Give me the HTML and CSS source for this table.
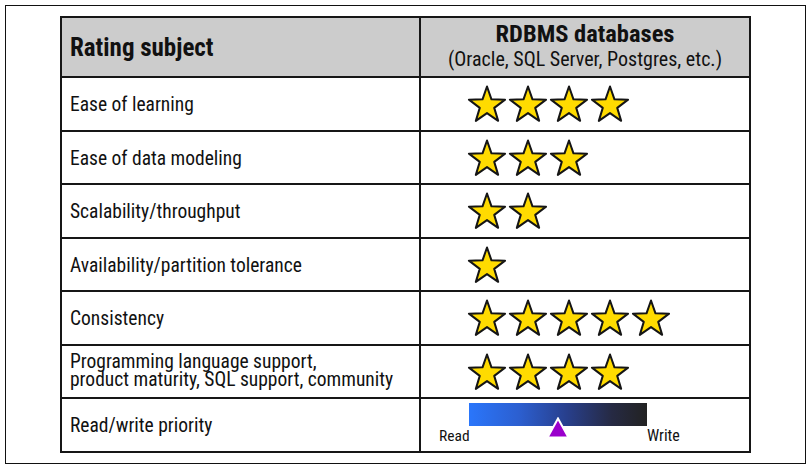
FILE: index.html
```html
<!DOCTYPE html>
<html lang="en">
<head>
<meta charset="utf-8">
<title>Rating table</title>
<link rel="stylesheet" href="styles.css">
</head>
<body>
<svg class="defs" aria-hidden="true">
  <symbol id="star" viewBox="0 0 40 38">
    <polygon points="20,1.5 24.47,14.35 38.07,14.63 27.23,22.85 31.17,35.87 20,28.1 8.83,35.87 12.77,22.85 1.93,14.63 15.53,14.35" fill="#ffdb00" stroke="#151515" stroke-width="2" stroke-linejoin="round"/>
  </symbol>
</svg>
<div class="frame">
  <div class="table">
    <div class="cell head head-left">Rating subject</div>
    <div class="cell head head-right">
      <div class="h1">RDBMS databases</div>
      <div class="h2">(Oracle, SQL Server, Postgres, etc.)</div>
    </div>

    <div class="cell label">Ease of learning</div>
    <div class="cell stars">
      <svg class="star"><use href="#star"/></svg><svg class="star"><use href="#star"/></svg><svg class="star"><use href="#star"/></svg><svg class="star"><use href="#star"/></svg>
    </div>

    <div class="cell label">Ease of data modeling</div>
    <div class="cell stars">
      <svg class="star"><use href="#star"/></svg><svg class="star"><use href="#star"/></svg><svg class="star"><use href="#star"/></svg>
    </div>

    <div class="cell label">Scalability/throughput</div>
    <div class="cell stars">
      <svg class="star"><use href="#star"/></svg><svg class="star"><use href="#star"/></svg>
    </div>

    <div class="cell label">Availability/partition tolerance</div>
    <div class="cell stars">
      <svg class="star"><use href="#star"/></svg>
    </div>

    <div class="cell label">Consistency</div>
    <div class="cell stars">
      <svg class="star"><use href="#star"/></svg><svg class="star"><use href="#star"/></svg><svg class="star"><use href="#star"/></svg><svg class="star"><use href="#star"/></svg><svg class="star"><use href="#star"/></svg>
    </div>

    <div class="cell label label-2">Programming language support,<br>product maturity, SQL support, community</div>
    <div class="cell stars">
      <svg class="star"><use href="#star"/></svg><svg class="star"><use href="#star"/></svg><svg class="star"><use href="#star"/></svg><svg class="star"><use href="#star"/></svg>
    </div>

    <div class="cell label">Read/write priority</div>
    <div class="cell rw">
      <span class="rw-label rw-read">Read</span>
      <div class="bar">
        <svg class="marker" viewBox="0 0 24 22"><polygon points="12,1.5 22.5,20.5 1.5,20.5" fill="#9a00cc" stroke="#ffffff" stroke-width="2" stroke-linejoin="miter"/></svg>
      </div>
      <span class="rw-label rw-write">Write</span>
    </div>
  </div>
</div>
</body>
</html>
```
FILE: styles.css
```css
html, body {
  margin: 0;
}
body {
  padding: 5px;
  background: #ffffff;
  color: #111111;
  font-family: Roboto, "Roboto Condensed", sans-serif;
  font-stretch: 80%;
}
.defs {
  display: block;
  width: 0;
  height: 0;
  overflow: hidden;
}
.frame {
  box-sizing: border-box;
  height: 459px;
  border: 1px solid #111111;
  padding: 10px 0 0 54px;
}
.table {
  display: grid;
  grid-template-columns: 357px 328px;
  grid-template-rows: 58px 52px 51px 52px 51px 52px 51px 52px;
  gap: 2px;
  width: max-content;
  background: #161616;
  border: 2px solid #161616;
}
.cell {
  background: #ffffff;
  display: flex;
  align-items: center;
  min-width: 0;
}
.head {
  background: #cccccc;
}
.head-left {
  padding-left: 8px;
  font-weight: bold;
  font-size: 25px;
}
.head-right {
  flex-direction: column;
  justify-content: flex-start;
  align-items: center;
  padding-top: 4px;
}
.h1 {
  font-weight: bold;
  font-size: 24.5px;
  line-height: 24px;
}
.h2 {
  font-size: 20px;
  line-height: 22px;
  margin-top: 2px;
}
.label {
  padding: 2px 0 0 8px;
  font-size: 19.5px;
  line-height: 17.5px;
}
.label-2 {
  padding: 0 0 2px 8px;
  font-stretch: 81%;
}
.stars {
  padding-left: 46px;
  gap: 1px;
}
.star {
  display: block;
  width: 40px;
  height: 38px;
  flex: none;
}
.rw {
  align-items: flex-start;
  padding: 4px 0 0 18px;
}
.rw-label {
  font-size: 15.5px;
  line-height: 16px;
  margin-top: 25px;
  flex: none;
}
.rw-read {
  width: 30px;
}
.rw-write {
  font-size: 16px;
}
.bar {
  position: relative;
  flex: none;
  width: 178px;
  height: 23px;
  background: linear-gradient(90deg, #2a76fb 0%, #2c5fd0 28%, #283f8c 55%, #262a44 80%, #222222 100%);
}
.marker {
  position: absolute;
  left: 77px;
  top: 14px;
  width: 24px;
  height: 22px;
}
```
